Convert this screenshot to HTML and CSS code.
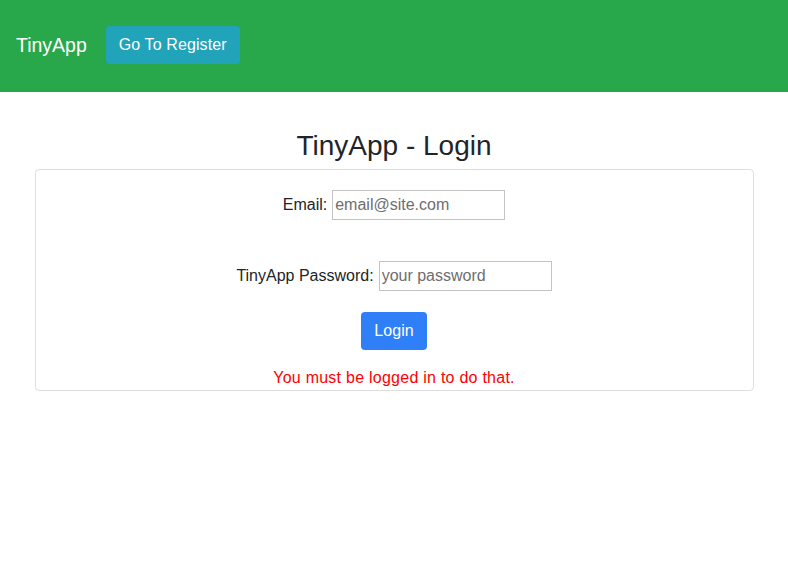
FILE: index.html
```html
<!DOCTYPE html>
<html lang="en">
<head>
<meta charset="utf-8">
<title>TinyApp - Login</title>
<link rel="stylesheet" href="styles.css">
</head>
<body>
<nav class="navbar">
  <span class="brand">TinyApp</span>
  <a class="btn btn-info" href="#">Go To Register</a>
</nav>
<main class="main">
  <h3 class="title">TinyApp - Login</h3>
  <div class="card">
    <form class="form">
      <div class="row">
        <label class="label" for="email">Email:</label>
        <input class="input" id="email" type="text" placeholder="email@site.com">
      </div>
      <div class="row row-pass">
        <label class="label" for="pass">TinyApp Password:</label>
        <input class="input" id="pass" type="password" placeholder="your password">
      </div>
      <button class="btn btn-primary" type="button">Login</button>
    </form>
    <p class="error">You must be logged in to do that.</p>
  </div>
</main>
</body>
</html>
```
FILE: styles.css
```css
* { box-sizing: border-box; }
html, body { margin: 0; padding: 0; }
body {
  font-family: "Liberation Sans", Arial, sans-serif;
  font-size: 16px;
  line-height: 1.5;
  color: #212529;
  background: #fff;
  width: 788px;
  height: 572px;
}
.navbar {
  background: #28a74b;
  height: 92px;
  display: flex;
  align-items: center;
  padding: 0 16px 2px 16px;
  gap: 19px;
}
.brand {
  color: #fff;
  font-size: 19.5px;
  line-height: 30px;
}
.btn {
  display: inline-block;
  border: 0;
  border-radius: 4px;
  color: #fff;
  font-family: inherit;
  font-size: 16px;
  line-height: 24px;
  padding: 7px 13px;
  text-decoration: none;
  cursor: pointer;
  letter-spacing: 0.1px;
}
.btn-info { background: #21a3b9; }
.btn-primary { background: #2f7ff9; padding: 7px 13px; }
.main {
  padding-top: 36px;
}
.title {
  margin: 0 0 5px 0;
  text-align: center;
  font-size: 28px;
  font-weight: 500;
  line-height: 36px;
}
.card {
  width: 719px;
  margin: 0 auto;
  border: 1px solid rgba(0,0,0,0.13);
  border-radius: 4px;
  padding: 20px 20px 0 20px;
  height: 222px;
}
.form {
  display: flex;
  flex-direction: column;
  align-items: center;
}
.row {
  display: flex;
  align-items: center;
  gap: 5px;
  height: 30px;
}
.row-pass { margin-top: 41px; }
.label { color: #212529; }
.input {
  width: 173px;
  height: 30px;
  border: 1px solid #c4c4c4;
  font-family: inherit;
  font-size: 16px;
  padding: 1px 2px;
  color: #495057;
}
.input::placeholder { color: #6e6e6e; }
.form .btn-primary { margin-top: 21px; }
.error {
  margin: 16px 0 0 0;
  text-align: center;
  color: #ff0000;
  line-height: 24px;
  letter-spacing: 0.25px;
}
```
